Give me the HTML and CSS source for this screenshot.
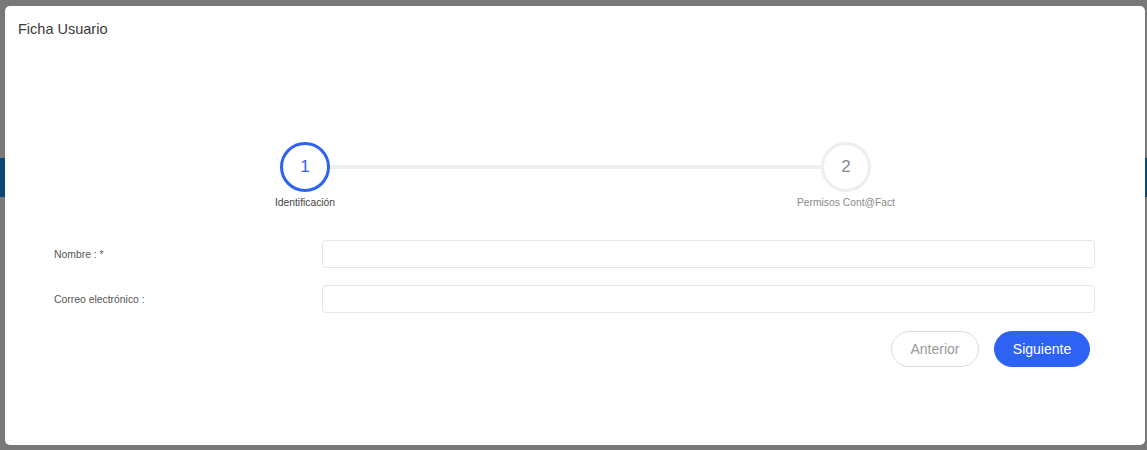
FILE: index.html
```html
<!DOCTYPE html>
<html lang="es">
<head>
<meta charset="utf-8">
<title>Ficha Usuario</title>
<link rel="stylesheet" href="styles.css">
</head>
<body>
<div class="page">
  <div class="page-band"></div>
</div>
<div class="modal">
  <div class="modal-title">Ficha Usuario</div>
  <div class="stepper">
    <div class="step step-active">
      <div class="step-circle">1</div>
      <div class="step-label">Identificación</div>
    </div>
    <div class="step-line"></div>
    <div class="step">
      <div class="step-circle">2</div>
      <div class="step-label">Permisos Cont@Fact</div>
    </div>
  </div>
  <form class="form">
    <div class="form-row">
      <label class="form-label">Nombre : *</label>
      <input class="form-input" type="text">
    </div>
    <div class="form-row">
      <label class="form-label">Correo electrónico :</label>
      <input class="form-input" type="text">
    </div>
    <div class="form-actions">
      <button type="button" class="btn btn-secondary">Anterior</button>
      <button type="button" class="btn btn-primary">Siguiente</button>
    </div>
  </form>
</div>
</body>
</html>
```
FILE: styles.css
```css
* { box-sizing: border-box; }
html, body { margin: 0; padding: 0; }
body {
  width: 1147px;
  height: 450px;
  overflow: hidden;
  background: #787878;
  font-family: "Liberation Sans", Arial, sans-serif;
}
.page { padding-top: 158px; }
.page-band { height: 39px; background: #0c4675; }

.modal {
  position: absolute;
  left: 5px;
  top: 6px;
  width: 1140px;
  height: 439px;
  background: #fff;
  border-radius: 5px;
}
.modal-title {
  padding: 15px 0 0 13px;
  font-size: 14.5px;
  line-height: 16px;
  color: #3a3a3a;
}
.stepper {
  display: flex;
  align-items: flex-start;
  margin: 105px 0 0 235px;
  width: 671px;
}
.step {
  width: 130px;
  display: flex;
  flex-direction: column;
  align-items: center;
  position: relative;
  z-index: 1;
}
.step-circle {
  width: 50px;
  height: 50px;
  border-radius: 50%;
  border: 3px solid #eeeeee;
  background: #fff;
  display: flex;
  align-items: center;
  justify-content: center;
  font-size: 17px;
  color: #8a8a8a;
}
.step-active .step-circle {
  border-color: #2d62f5;
  color: #2d62f5;
}
.step-label {
  margin-top: 5px;
  font-size: 10.3px;
  line-height: 12px;
  color: #8a8a8a;
  white-space: nowrap;
}
.step-active .step-label { color: #444; }
.step-line {
  flex: 1;
  height: 4px;
  margin: 23px -40px 0;
  background: #efefef;
}

.form {
  margin: 31px 50px 0 49px;
}
.form-row {
  display: grid;
  grid-template-columns: 268px 1fr;
  align-items: center;
  margin-bottom: 17px;
}
.form-label {
  font-size: 10.4px;
  color: #555;
}
.form-input {
  height: 28px;
  border: 1px solid #e6e6e6;
  border-radius: 4px;
  background: #fff;
  outline: none;
  font: inherit;
}
.form-actions {
  display: flex;
  justify-content: flex-end;
  gap: 15px;
  padding: 1px 5px 0 0;
}
.btn {
  height: 36px;
  border-radius: 18px;
  font-family: "Liberation Sans", Arial, sans-serif;
  font-size: 14px;
  padding: 0;
  cursor: pointer;
}
.btn-secondary {
  width: 88px;
  background: #fff;
  border: 1px solid #dcdcdc;
  color: #9a9a9a;
}
.btn-primary {
  width: 96px;
  background: #2d62f5;
  border: 1px solid #2d62f5;
  color: #fff;
}
```
